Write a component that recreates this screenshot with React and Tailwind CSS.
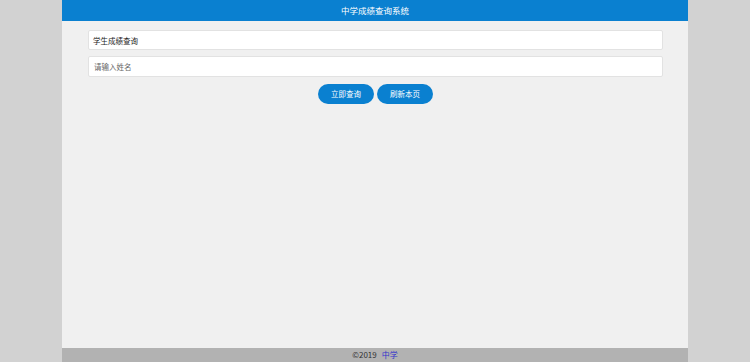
const font = { fontFamily: '"Noto Sans CJK SC", "Liberation Sans", sans-serif' };

export default function App() {
  return (
    <div className="min-h-screen bg-[#d2d2d2]" style={font}>
      <div className="mx-auto flex h-[362px] w-[626px] flex-col bg-[#f0f0f0]">
        <header className="flex h-[21px] items-center justify-center bg-[#0a80d0] text-[8.5px] text-white">
          中学成绩查询系统
        </header>

        <main className="flex-1 pl-[26px] pr-[25px] pt-[9px]">
          <input
            readOnly
            value="学生成绩查询"
            className="block h-[20px] w-full rounded-[2px] border border-[#e2e2e2] bg-white px-[4px] text-[7.5px] text-[#1a1a1a] outline-none"
          />
          <input
            placeholder="请输入姓名"
            className="mt-[6px] block h-[21px] w-full rounded-[2px] border border-[#e2e2e2] bg-white px-[5px] text-[7.5px] text-[#333] outline-none placeholder:text-[#666]"
          />
          <div className="mt-[7px] flex justify-center gap-[3px]">
            <button className="h-[20px] w-[56px] rounded-full bg-[#0a80d0] text-[7.5px] text-white">
              立即查询
            </button>
            <button className="h-[20px] w-[56px] rounded-full bg-[#0a80d0] text-[7.5px] text-white">
              刷新本页
            </button>
          </div>
        </main>

        <footer className="flex h-[14px] items-center justify-center bg-[#b2b2b2] text-[8px] text-[#333]">
          ©2019
          <a href="#" className="ml-[5px] text-[#3333cc]">中学</a>
        </footer>
      </div>
    </div>
  );
}
